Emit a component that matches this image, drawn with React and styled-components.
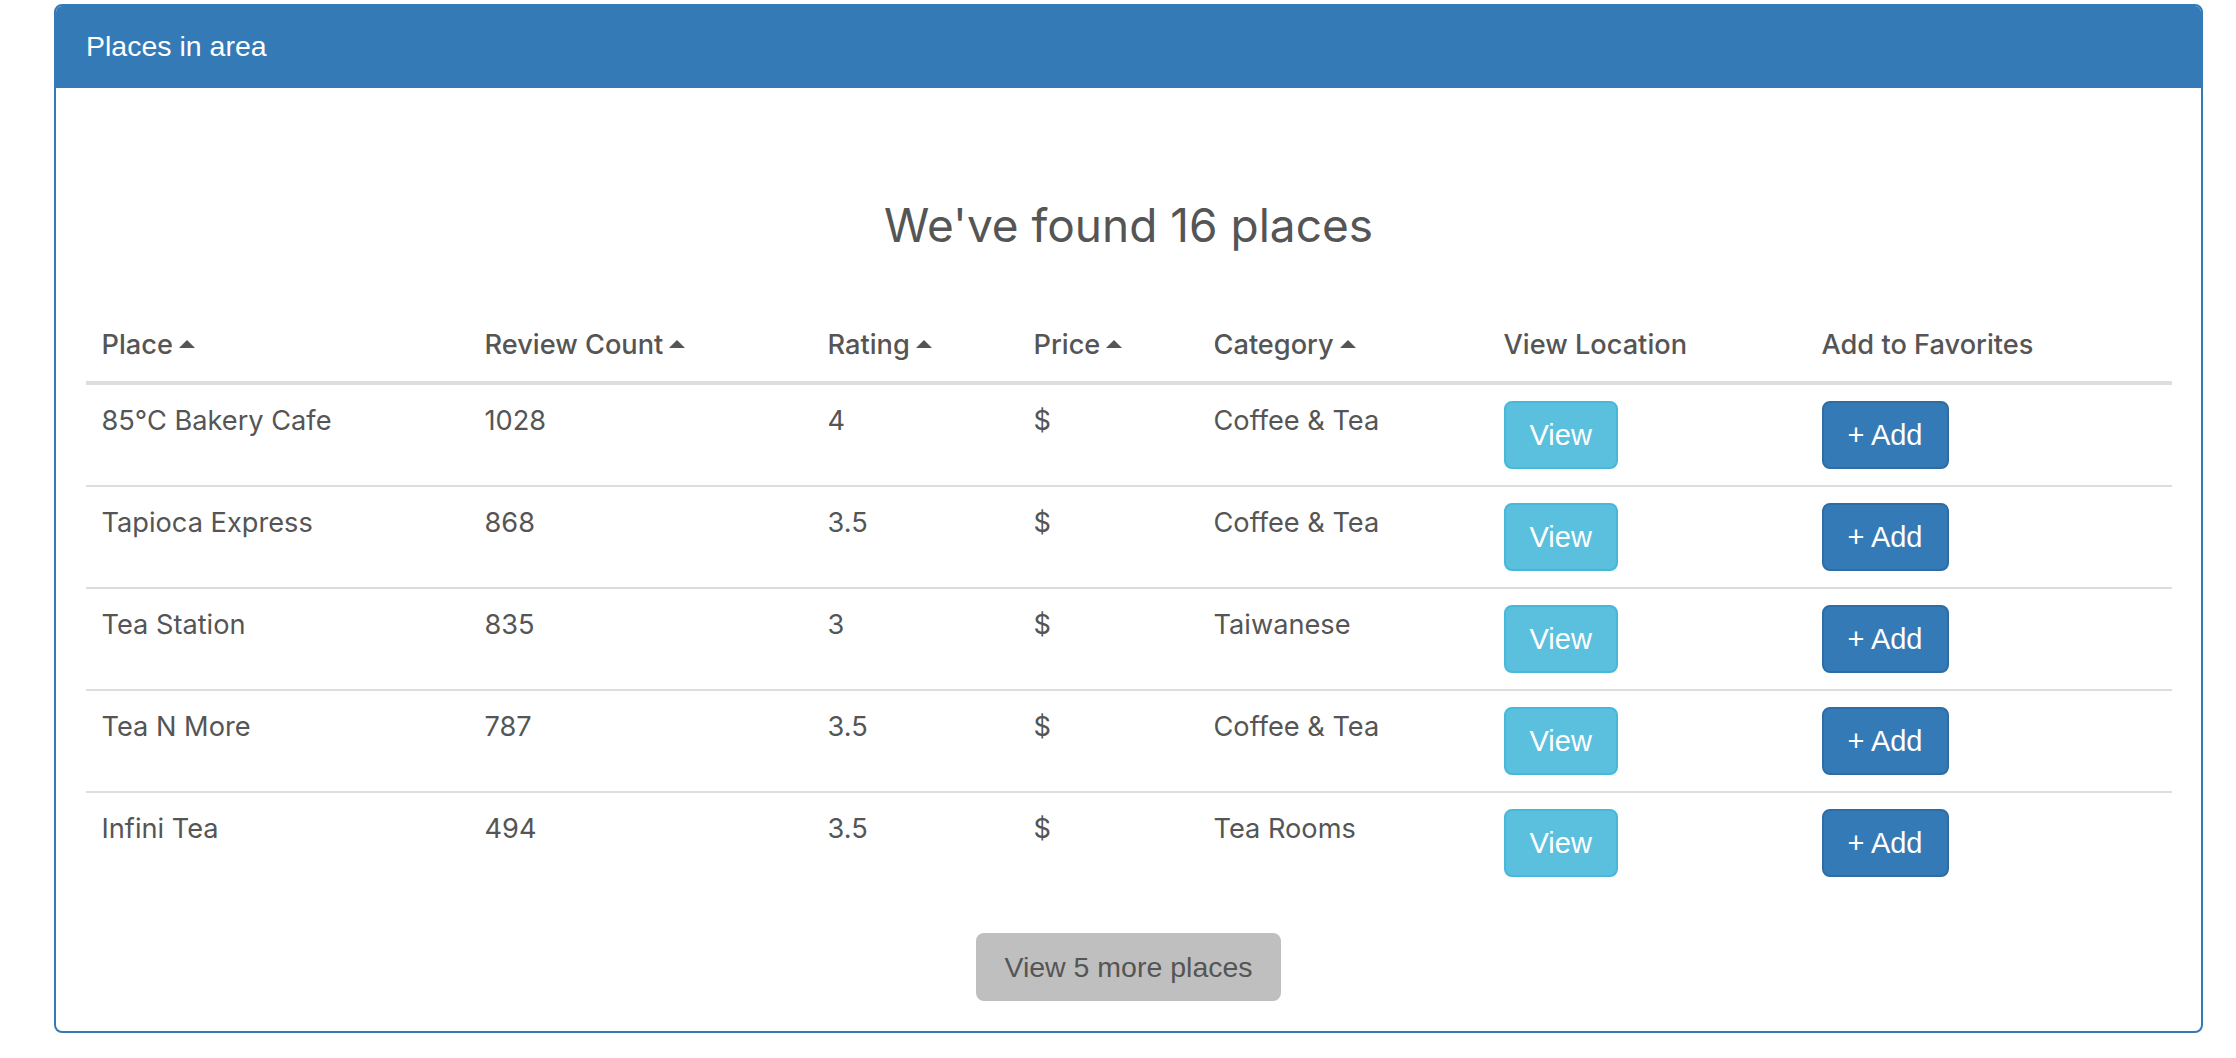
import React from "react";
import styled, { createGlobalStyle } from "styled-components";

const Global = createGlobalStyle`
  html, body { margin: 0; padding: 0; background: #fff; }
  body { font-family: Inter, "Liberation Sans", sans-serif; color: #555; }
  * { box-sizing: border-box; }
`;

const Page = styled.div`
  padding: 4px 33px 0 54px;
`;

const Panel = styled.section`
  border: 2px solid #337ab7;
  border-radius: 8px;
  overflow: hidden;
  background: #fff;
`;

const PanelHeading = styled.header`
  background: #337ab7;
  color: #fff;
  font-family: "Liberation Sans", Arial, sans-serif;
  font-size: 28.5px;
  line-height: 40px;
  padding: 20px 30px 22px;
`;

const PanelBody = styled.div`
  padding: 30px;
  display: flex;
  flex-direction: column;
  align-items: center;
`;

const Title = styled.h3`
  margin: 81px 0 57px;
  font-family: Inter, sans-serif;
  font-weight: 400;
  font-size: 46px;
  line-height: 53px;
  color: #555;
`;

const Table = styled.table`
  width: 100%;
  border-collapse: collapse;
  table-layout: fixed;
  margin-bottom: 40px;
  font-size: 27.2px;
  line-height: 40px;
`;

const Th = styled.th`
  text-align: left;
  font-weight: 500;
  padding: 16px 16px;
  border-bottom: 4px solid #ddd;
  vertical-align: bottom;
  white-space: nowrap;
`;

const Td = styled.td`
  padding: 16px 16px;
  border-top: ${(p) => (p.$first ? "none" : "2px solid #ddd")};
  vertical-align: top;
`;

const Caret = styled.span`
  display: inline-block;
  width: 0;
  height: 0;
  margin-left: 6px;
  vertical-align: middle;
  position: relative;
  top: -3px;
  border-left: 8px solid transparent;
  border-right: 8px solid transparent;
  border-bottom: 8px solid #555;
`;

const Btn = styled.button`
  font-family: "Liberation Sans", Arial, sans-serif;
  font-size: 29px;
  line-height: 40px;
  height: 68px;
  padding: 12px 24px;
  border-radius: 8px;
  border: 2px solid ${(p) => p.$border};
  background: ${(p) => p.$bg};
  color: ${(p) => p.$color || "#fff"};
  cursor: pointer;
  display: inline-block;
  vertical-align: top;
`;

const MoreBtn = styled(Btn)`
  font-size: 28.5px;
  padding: 12px 26px;
`;

const cols = [383, 343, 206, 180, 290, 318, 366];

const headers = [
  { label: "Place", sort: true },
  { label: "Review Count", sort: true },
  { label: "Rating", sort: true },
  { label: "Price", sort: true },
  { label: "Category", sort: true },
  { label: "View Location", sort: false },
  { label: "Add to Favorites", sort: false },
];

const rows = [
  ["85°C Bakery Cafe", "1028", "4", "$", "Coffee & Tea"],
  ["Tapioca Express", "868", "3.5", "$", "Coffee & Tea"],
  ["Tea Station", "835", "3", "$", "Taiwanese"],
  ["Tea N More", "787", "3.5", "$", "Coffee & Tea"],
  ["Infini Tea", "494", "3.5", "$", "Tea Rooms"],
];

export default function App() {
  return (
    <>
      <Global />
      <Page>
        <Panel>
          <PanelHeading>Places in area</PanelHeading>
          <PanelBody>
            <Title>We've found 16 places</Title>
            <Table>
              <colgroup>
                {cols.map((w, i) => (
                  <col key={i} style={{ width: w }} />
                ))}
              </colgroup>
              <thead>
                <tr>
                  {headers.map((h) => (
                    <Th key={h.label}>
                      {h.label}
                      {h.sort && <Caret />}
                    </Th>
                  ))}
                </tr>
              </thead>
              <tbody>
                {rows.map((r, i) => (
                  <tr key={r[0]}>
                    {r.map((c, j) => (
                      <Td key={j} $first={i === 0}>
                        {c}
                      </Td>
                    ))}
                    <Td $first={i === 0}>
                      <Btn $bg="#5bc0de" $border="#46b8da">View</Btn>
                    </Td>
                    <Td $first={i === 0}>
                      <Btn $bg="#337ab7" $border="#2e6da4">+ Add</Btn>
                    </Td>
                  </tr>
                ))}
              </tbody>
            </Table>
            <MoreBtn $bg="#bfbfbf" $border="#bfbfbf" $color="#555">
              View 5 more places
            </MoreBtn>
          </PanelBody>
        </Panel>
      </Page>
    </>
  );
}
